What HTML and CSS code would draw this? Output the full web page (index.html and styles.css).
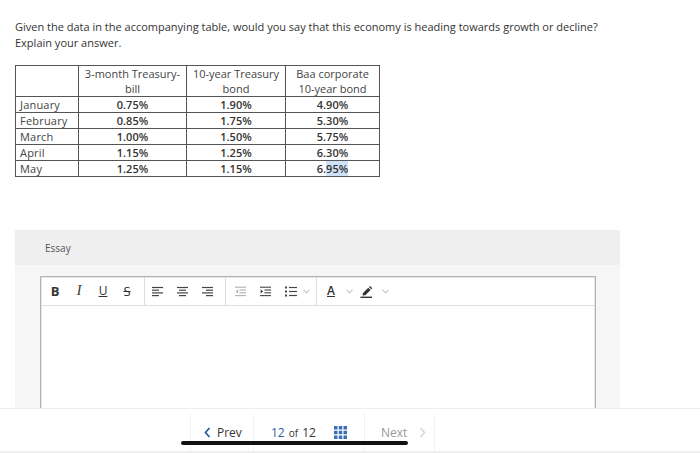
FILE: index.html
```html
<!DOCTYPE html>
<html>
<head>
<meta charset="utf-8">
<link rel="stylesheet" href="styles.css">
</head>
<body>
<div class="page">
  <p class="question">Given the data in the accompanying table, would you say that this economy is heading towards growth or decline?<br>Explain your answer.</p>
  <table class="data">
    <colgroup><col class="c1"><col class="c2"><col class="c3"><col class="c4"></colgroup>
    <tr class="head"><th></th><th>3-month Treasury-<br>bill</th><th>10-year Treasury<br>bond</th><th>Baa corporate<br>10-year bond</th></tr>
    <tr><td>January</td><td>0.75%</td><td>1.90%</td><td>4.90%</td></tr>
    <tr><td>February</td><td>0.85%</td><td>1.75%</td><td>5.30%</td></tr>
    <tr><td>March</td><td>1.00%</td><td>1.50%</td><td>5.75%</td></tr>
    <tr><td>April</td><td>1.15%</td><td>1.25%</td><td>6.30%</td></tr>
    <tr><td>May</td><td>1.25%</td><td>1.15%</td><td>6.<span class="sel">95%</span></td></tr>
  </table>

  <div class="panel">
    <div class="panel-head">Essay</div>
    <div class="panel-body">
      <div class="editor">
        <div class="toolbar">
          <div class="grp g1">
            <span class="btn"><span class="tb b">B</span></span>
            <span class="btn"><span class="tb i">I</span></span>
            <span class="btn"><span class="tb u">U</span></span>
            <span class="btn"><span class="tb s">S</span></span>
          </div>
          <div class="grp g2">
            <span class="btn"><svg width="11" height="11" viewBox="0 0 11 11"><g stroke="#444" stroke-width="1.2"><line x1="0" y1="1.5" x2="11" y2="1.5"/><line x1="0" y1="4.2" x2="7" y2="4.2"/><line x1="0" y1="6.9" x2="11" y2="6.9"/><line x1="0" y1="9.6" x2="7" y2="9.6"/></g></svg></span>
            <span class="btn"><svg width="11" height="11" viewBox="0 0 11 11"><g stroke="#444" stroke-width="1.2"><line x1="0" y1="1.5" x2="11" y2="1.5"/><line x1="2" y1="4.2" x2="9" y2="4.2"/><line x1="0" y1="6.9" x2="11" y2="6.9"/><line x1="2" y1="9.6" x2="9" y2="9.6"/></g></svg></span>
            <span class="btn"><svg width="11" height="11" viewBox="0 0 11 11"><g stroke="#444" stroke-width="1.2"><line x1="0" y1="1.5" x2="11" y2="1.5"/><line x1="4" y1="4.2" x2="11" y2="4.2"/><line x1="0" y1="6.9" x2="11" y2="6.9"/><line x1="4" y1="9.6" x2="11" y2="9.6"/></g></svg></span>
          </div>
          <div class="grp g3">
            <span class="btn"><svg width="11" height="11" viewBox="0 0 11 11"><g stroke="#b0b0b0" stroke-width="1.1"><line x1="0" y1="1.2" x2="11" y2="1.2"/><line x1="4.5" y1="4" x2="11" y2="4"/><line x1="4.5" y1="6.8" x2="11" y2="6.8"/><line x1="0" y1="9.6" x2="11" y2="9.6"/></g><path d="M3.2 3.2 L0.6 5.4 L3.2 7.6Z" fill="#b0b0b0"/></svg></span>
            <span class="btn"><svg width="11" height="11" viewBox="0 0 11 11"><g stroke="#444" stroke-width="1.1"><line x1="0" y1="1.2" x2="11" y2="1.2"/><line x1="4.5" y1="4" x2="11" y2="4"/><line x1="4.5" y1="6.8" x2="11" y2="6.8"/><line x1="0" y1="9.6" x2="11" y2="9.6"/></g><path d="M0.6 3.2 L3.2 5.4 L0.6 7.6Z" fill="#444"/></svg></span>
            <span class="btn"><svg width="12" height="11" viewBox="0 0 12 11"><g fill="#444"><rect x="0" y="0.5" width="2" height="2"/><rect x="0" y="4.5" width="2" height="2"/><rect x="0" y="8.5" width="2" height="2"/></g><g stroke="#444" stroke-width="1.2"><line x1="4" y1="1.5" x2="12" y2="1.5"/><line x1="4" y1="5.5" x2="12" y2="5.5"/><line x1="4" y1="9.5" x2="12" y2="9.5"/></g></svg></span>
            <svg class="chev c3" width="7" height="5" viewBox="0 0 7 5"><path d="M0.5 0.8 L3.5 4 L6.5 0.8" fill="none" stroke="#aaa" stroke-width="1"/></svg>
          </div>
          <div class="grp g4">
            <span class="btn abtn"><span class="tb a">A</span></span>
            <svg class="chev c4a" width="7" height="5" viewBox="0 0 7 5"><path d="M0.5 0.8 L3.5 4 L6.5 0.8" fill="none" stroke="#aaa" stroke-width="1"/></svg>
            <span class="btn hbtn"><svg width="13" height="13" viewBox="0 0 13 13"><path d="M3 8 L8.3 2.7 L10.6 5 L5.3 10.3 L2.6 10.6Z" fill="#333"/><path d="M9 2 L10 1 L12.3 3.3 L11.3 4.3Z" fill="#333"/><rect x="0.5" y="11.6" width="11.5" height="1.4" fill="#333"/></svg></span>
            <svg class="chev c4b" width="7" height="5" viewBox="0 0 7 5"><path d="M0.5 0.8 L3.5 4 L6.5 0.8" fill="none" stroke="#aaa" stroke-width="1"/></svg>
          </div>
        </div>
        <div class="area"></div>
      </div>
    </div>
  </div>

  <div class="footer">
    <div class="nav">
      <div class="seg prev">
        <svg width="7" height="11" viewBox="0 0 7 11"><path d="M5.5 1 L1.5 5.5 L5.5 10" fill="none" stroke="#2d5fa3" stroke-width="1.8"/></svg>
        <span>Prev</span>
      </div>
      <div class="seg count">
        <span class="cur">12</span><span class="of">of</span><span class="tot">12</span>
        <svg class="grid" width="13" height="13" viewBox="0 0 13 13"><g fill="#3b6fb6"><rect x="0" y="0" width="3.5" height="3.5"/><rect x="4.75" y="0" width="3.5" height="3.5"/><rect x="9.5" y="0" width="3.5" height="3.5"/><rect x="0" y="4.75" width="3.5" height="3.5"/><rect x="4.75" y="4.75" width="3.5" height="3.5"/><rect x="9.5" y="4.75" width="3.5" height="3.5"/><rect x="0" y="9.5" width="3.5" height="3.5"/><rect x="4.75" y="9.5" width="3.5" height="3.5"/><rect x="9.5" y="9.5" width="3.5" height="3.5"/></g></svg>
      </div>
      <div class="seg next">
        <span>Next</span>
        <svg width="7" height="11" viewBox="0 0 7 11"><path d="M1.5 1 L5.5 5.5 L1.5 10" fill="none" stroke="#d4d4d4" stroke-width="1.5"/></svg>
      </div>
    </div>
    <div class="homebar"></div>
  </div>
</div>
</body>
</html>
```

FILE: styles.css
```css
html, body {
  margin: 0;
  padding: 0;
  background: #fff;
}
body {
  font-family: "Open Sans", "Liberation Sans", sans-serif;
  color: #333;
  width: 700px;
  height: 453px;
  overflow: hidden;
}
.page {
  padding: 19px 0 0 15px;
}
.question {
  margin: 0;
  font-size: 11px;
  line-height: 16px;
  color: #333;
}
.data {
  margin-top: 14px;
  border-collapse: collapse;
  table-layout: fixed;
  width: 364px;
  font-size: 11px;
  line-height: 15px;
  border: 1px solid #555;
}
.data .c1 { width: 63px; }
.data .c2 { width: 108px; }
.data .c3 { width: 99px; }
.data .c4 { width: 94px; }
.data th, .data td {
  border: 1px solid #555;
  padding: 0;
  text-align: center;
  white-space: nowrap;
}
.data th {
  font-weight: 400;
  color: #444;
}
.data td {
  font-weight: 600;
  color: #333;
}
.data td:first-child {
  text-align: left;
  padding-left: 4px;
  font-weight: 400;
  color: #444;
  letter-spacing: 0.2px;
}
.sel {
  background: #cfe2f7;
}
.panel {
  margin-top: 53px;
  width: 605px;
  height: 178px;
  overflow: hidden;
  background: #f6f6f6;
}
.panel-head {
  height: 35px;
  line-height: 37px;
  background: #efefef;
  padding-left: 30px;
  font-size: 10px;
  color: #555;
}
.panel-body {
  padding: 11px 0 0 25px;
}
.editor {
  width: 554px;
  height: 200px;
  background: #fff;
  border: 1px solid #b3b3b3;
  box-shadow: inset 0 0 0 1px #e6e6e6;
}
.toolbar {
  height: 28px;
  border-bottom: 1px solid #ddd;
  display: flex;
  align-items: stretch;
}
.grp {
  display: flex;
  align-items: center;
  border-right: 1px solid #ddd;
}
.g1 { padding: 0 5px 0 2px; }
.g1 .btn { width: 24px; }
.g2 { padding: 0 5px 0 0; }
.g2 .btn { width: 25px; }
.g3 { padding: 0 6px 0 2px; }
.g3 .btn { width: 25px; }
.g4 { padding: 0 0 0 3px; border-right: none; }
.btn {
  display: flex;
  justify-content: center;
  align-items: center;
  height: 28px;
}
.btn svg { display: block; }
.abtn { width: 22px; }
.hbtn { width: 16px; margin-left: 5px; }
.c4a { margin-left: 4px; }
.c4b { margin-left: 8px; }
.chev { display: block; }
.tb {
  display: inline-block;
  color: #333;
  line-height: 14px;
}
.tb.b { font-weight: 700; font-size: 13px; }
.tb.i { font-family: "Liberation Serif", serif; font-style: italic; font-size: 14px; }
.tb.u { text-decoration: underline; font-size: 12px; }
.tb.s { text-decoration: line-through; font-size: 13px; }
.tb.a { text-decoration: underline; font-size: 12px; font-weight: 600; }
.footer {
  position: relative;
  height: 45px;
  border-top: 1px solid #eee;
  border-bottom: 2px solid #eee;
  margin-left: -15px;
  box-sizing: border-box;
  background: #fff;
}
.nav {
  display: flex;
  margin-left: 190px;
  padding-top: 5px;
  height: 37px;
  font-size: 12px;
}
.seg {
  display: flex;
  align-items: center;
  border-left: 1px solid #f2f2f2;
  border-right: 1px solid #f2f2f2;
  margin-right: -1px;
}
.prev {
  width: 64px;
  padding-left: 13px;
  gap: 6px;
  box-sizing: border-box;
  color: #333;
}
.count {
  width: 112px;
  padding-left: 17px;
  box-sizing: border-box;
  color: #333;
}
.count .cur { color: #2d5fa3; }
.count .of { font-size: 10px; margin: 0 4px; }
.count .grid { margin-left: 18px; }
.next {
  width: 71px;
  padding-left: 16px;
  gap: 12px;
  box-sizing: border-box;
  color: #999;
}
.homebar {
  position: absolute;
  left: 181px;
  top: 32px;
  width: 227px;
  height: 4px;
  border-radius: 2px;
  background: #111;
}
```
